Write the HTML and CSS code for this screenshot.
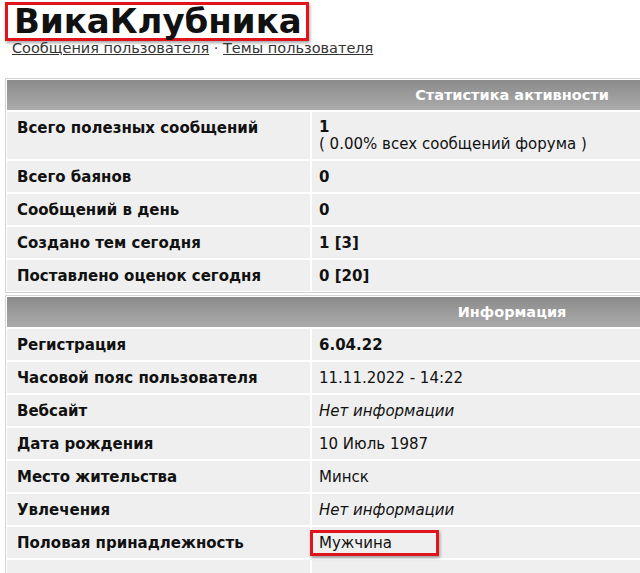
FILE: index.html
```html
<!DOCTYPE html>
<html lang="ru">
<head>
  <meta charset="UTF-8" />
  <meta name="viewport" content="width=device-width, initial-scale=1.0"/>
  <title>ВикаКлубника</title>
  <link rel="stylesheet" href="styles.css">
</head>
<body>

<header class="profile-head">
  <h1><span class="mark">ВикаКлубника</span></h1>
  <p class="links">
    <a href="#posts">Сообщения пользователя</a> &middot; <a href="#topics">Темы пользователя</a>
  </p>
</header>

<div class="box">
  <table class="info">
    <tr><th colspan="2">Статистика активности</th></tr>
    <tr>
      <td class="label">Всего полезных сообщений</td>
      <td class="two-lines"><b>1</b><br>( 0.00% всех сообщений форума )</td>
    </tr>
    <tr><td class="label">Всего баянов</td><td><b>0</b></td></tr>
    <tr><td class="label">Сообщений в день</td><td><b>0</b></td></tr>
    <tr><td class="label">Создано тем сегодня</td><td><b>1 [3]</b></td></tr>
    <tr><td class="label">Поставлено оценок сегодня</td><td><b>0 [20]</b></td></tr>
  </table>
</div>

<div class="box">
  <table class="info">
    <tr><th colspan="2">Информация</th></tr>
    <tr><td class="label">Регистрация</td><td><b>6.04.22</b></td></tr>
    <tr><td class="label">Часовой пояс пользователя</td><td>11.11.2022 - 14:22</td></tr>
    <tr><td class="label">Вебсайт</td><td><i>Нет информации</i></td></tr>
    <tr><td class="label">Дата рождения</td><td>10 Июль 1987</td></tr>
    <tr><td class="label">Место жительства</td><td>Минск</td></tr>
    <tr><td class="label">Увлечения</td><td><i>Нет информации</i></td></tr>
    <tr><td class="label">Половая принадлежность</td><td><span class="mark mark-small">Мужчина</span></td></tr>
    <tr><td class="label">&nbsp;</td><td>&nbsp;</td></tr>
  </table>
</div>

</body>
</html>
```

FILE: styles.css
```css
:root {
  --row: #efefef;
  --text: #111;
  --line: #d2d2d2;
  --mark: #e0151b;
}

* {
  box-sizing: border-box;
  margin: 0;
  padding: 0;
}

html, body {
  overflow: hidden;
}

body {
  font-family: "DejaVu Sans", Verdana, sans-serif;
  font-size: 15px;
  color: var(--text);
  background: #fff;
  padding: 2px 0 0 5px;
}

/* Title and links */
.profile-head h1 {
  font-size: 34px;
  line-height: 33px;
  font-weight: bold;
}

.mark {
  display: inline-block;
  border: 3px solid var(--mark);
  box-shadow: 1px 2px 3px rgba(0, 0, 0, 0.35);
}

.profile-head .mark {
  padding: 0 4px 0 6px;
}

.links {
  margin: -1px 0 0 7px;
  color: #333;
  font-size: 14.5px;
  line-height: 16px;
}

.links a {
  color: #333;
}

/* Info tables */
.box {
  width: 1014px;
  border: 1px solid var(--line);
  padding: 1px;
  margin-top: 22px;
}

.box + .box {
  margin-top: 2px;
}

.info {
  width: 100%;
  border-collapse: separate;
  border-spacing: 0 2px;
  margin: -2px 0;
}

.info th {
  height: 30px;
  background: linear-gradient(#8b8b8b, #ababab);
  color: #fff;
  font-size: 14.5px;
  text-align: center;
  font-weight: bold;
}

.info td {
  background: var(--row);
  height: 31px;
  padding: 8px 8px 7px;
  vertical-align: top;
  line-height: 16px;
}

.info td.label {
  width: 305px;
  font-weight: bold;
  border-right: 2px solid #fff;
  padding-left: 10px;
}

.info td + td {
  padding-left: 7px;
}

.info td.two-lines {
  line-height: 17px;
  padding-top: 7px;
  padding-bottom: 6px;
}

.mark-small {
  width: 129px;
  margin: -5px 0 -5px -9px;
  padding: 2px 0 2px 6px;
}
```
